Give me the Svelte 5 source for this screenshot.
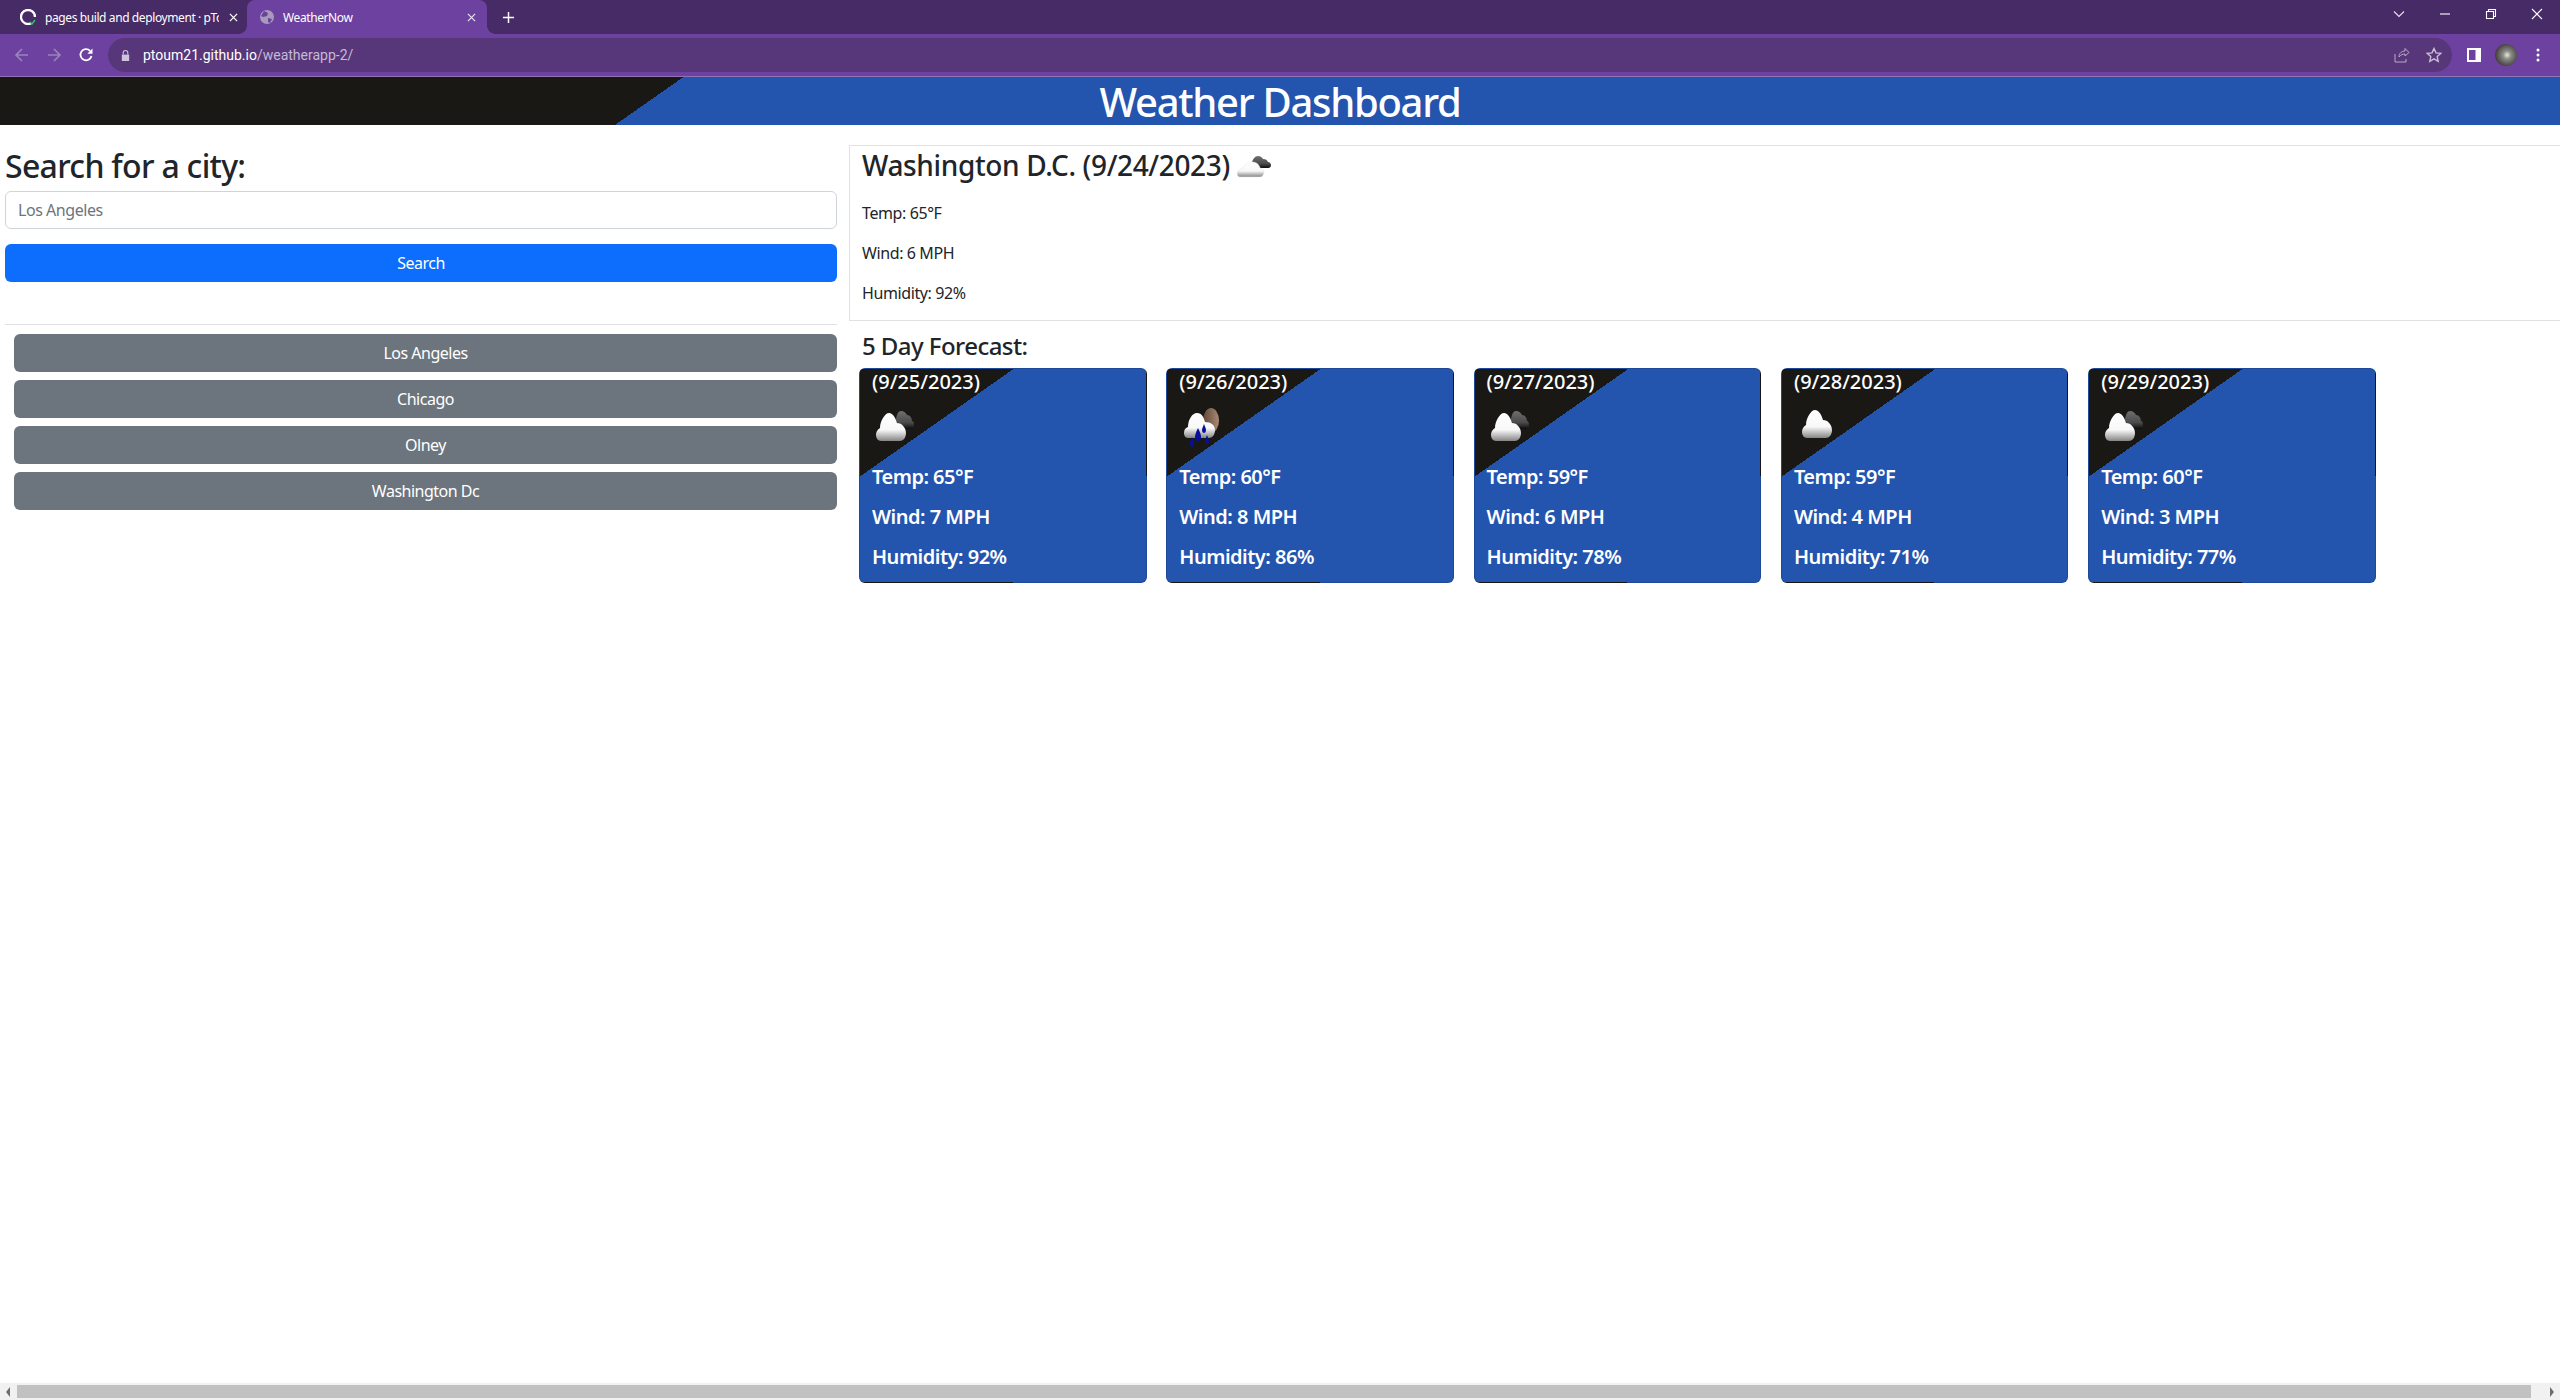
<script>
  const cities = ["Los Angeles", "Chicago", "Olney", "Washington Dc"];

  const forecast = [
    { date: "9/25/2023", icon: "clouds", temp: 65, wind: 7, humidity: 92 },
    { date: "9/26/2023", icon: "rain", temp: 60, wind: 8, humidity: 86 },
    { date: "9/27/2023", icon: "clouds", temp: 59, wind: 6, humidity: 78 },
    { date: "9/28/2023", icon: "cloud", temp: 59, wind: 4, humidity: 71 },
    { date: "9/29/2023", icon: "clouds", temp: 60, wind: 3, humidity: 77 },
  ];

  const cloudPath = "M9 44c-3 0-5-3-5-6 0-3 1-5 4-7 0-7 5-15 9-15 4 0 7 6 8 10 5 0 9 5 9 10 0 5-3 8-6 8z";
</script>

{#snippet cloudDefs()}
  <defs>
    <linearGradient id="cloudWhite" x1="0" y1="0" x2="0" y2="1">
      <stop offset="0" stop-color="#ffffff" />
      <stop offset="0.6" stop-color="#f8f8f8" />
      <stop offset="1" stop-color="#858585" />
    </linearGradient>
    <linearGradient id="cloudDark" x1="0" y1="0" x2="0" y2="1">
      <stop offset="0" stop-color="#6f6f6f" />
      <stop offset="0.65" stop-color="#4a4a4a" />
      <stop offset="1" stop-color="#0c0c0c" />
    </linearGradient>
    <linearGradient id="sun" x1="0" y1="0" x2="1" y2="0">
      <stop offset="0" stop-color="#5f4738" />
      <stop offset="1" stop-color="#a98a74" />
    </linearGradient>
  </defs>
{/snippet}

{#snippet weatherIcon(kind)}
  <svg class="weather-icon" viewBox="0 0 50 50" aria-hidden="true">
    {#if kind === "clouds"}
      <path d="M24 24c0-5 2-10 5-10 3 0 5 2 6 4 3 0 5 3 5 6 2 0 2 3 2 5 0 2-1 3-3 3H30z" fill="url(#cloudDark)" />
      <path d={cloudPath} fill="url(#cloudWhite)" />
    {:else if kind === "cloud"}
      <path d={cloudPath} fill="url(#cloudWhite)" transform="translate(4 -3)" />
    {:else}
      <ellipse cx="32" cy="23.5" rx="8" ry="12.5" fill="url(#sun)" />
      <path d="M9 41c-3 0-4-3-4-5 0-3 1-5 4-6 0-7 4-14 9-14 5 0 7 5 8 9 6 0 10 3 10 8 0 5-3 8-6 8z" fill="url(#cloudWhite)" />
      <path d="M19 31c2 4 3 6 3 9s-1 4-3 4-3-2-3-4 1-5 3-9zM13 40c1 3 2 4 2 6s-1 4-2 4-2-2-2-4 1-3 2-6zM28 38c1 3 2 4 2 6s-1 3-2 3-2-1-2-3 1-3 2-6zM25 27c1 3 2 4 2 6s-1 3-2 3-2-1-2-3 1-3 2-6z" fill="#06109c" />
    {/if}
  </svg>
{/snippet}

<svg class="defs" aria-hidden="true">{@render cloudDefs()}</svg>

<div class="window">
  <div class="tabstrip">
    <div class="tab">
      <svg class="favicon" viewBox="0 0 16 16">
        <path d="M11 14.300A7 7 0 1 1 15 8" fill="none" stroke="#fff" stroke-width="2.400" />
        <path d="M10 13l2 2 3-4" fill="none" stroke="#35c46a" stroke-width="1.400" />
      </svg>
      <span class="tab-title">pages build and deployment · pTo</span>
      <svg class="tab-close" viewBox="0 0 10 10"><path d="M1 1l8 8M9 1L1 9" stroke="#fff" stroke-width="1.400" /></svg>
    </div>
    <div class="tab active">
      <svg class="favicon" viewBox="0 0 16 16">
        <circle cx="8" cy="8" r="7" fill="#a79bb9" />
        <path d="M5 2l4 2-1 3-4 1-2-1zM9 9l4 1-2 4-2-1z" fill="#6d41a0" />
      </svg>
      <span class="tab-title">WeatherNow</span>
      <svg class="tab-close" viewBox="0 0 10 10"><path d="M1 1l8 8M9 1L1 9" stroke="#e6dff0" stroke-width="1.400" /></svg>
    </div>
    <svg class="new-tab" viewBox="0 0 14 14">
      <path d="M7 1v12M1 7h12" stroke="#fff" stroke-width="1.600" />
    </svg>
    <div class="window-controls">
      <svg viewBox="0 0 14 14"><path d="M2 4.500l5 5 5-5" fill="none" stroke="#e8e2ef" stroke-width="1.100" /></svg>
      <svg viewBox="0 0 14 14"><path d="M2 7h10" stroke="#fff" stroke-width="1.100" /></svg>
      <svg viewBox="0 0 14 14"><path d="M2.500 4.500h7v7h-7zM4.500 4.500v-2h7v7h-2" fill="none" stroke="#fff" stroke-width="1.100" /></svg>
      <svg viewBox="0 0 14 14"><path d="M2 2l10 10M12 2L2 12" stroke="#fff" stroke-width="1.100" /></svg>
    </div>
  </div>

  <div class="toolbar">
    <svg class="nav" viewBox="0 0 16 16"><path d="M14 8H2.500M8 2L2 8l6 6" fill="none" stroke="#9a83b8" stroke-width="1.700" /></svg>
    <svg class="nav" viewBox="0 0 16 16"><path d="M2 8h11.500M8 2l6 6-6 6" fill="none" stroke="#9a83b8" stroke-width="1.700" /></svg>
    <svg class="nav" viewBox="0 0 16 16"><path d="M13.500 9a5.600 5.600 0 1 1-1.400-5.200" fill="none" stroke="#fff" stroke-width="1.800" /><path d="M14.500 1.500v5.200H9.300z" fill="#fff" /></svg>
    <div class="omnibox">
      <svg class="lock" viewBox="0 0 12 14"><path d="M3.500 6V4a2.500 2.500 0 0 1 5 0v2" fill="none" stroke="#cfc4dc" stroke-width="1.200" /><rect x="2" y="6" width="8" height="7" fill="#cfc4dc" /></svg>
      <span class="url"><span class="host">ptoum21.github.io</span>/weatherapp-2/</span>
      <svg class="omni-icon" viewBox="0 0 16 16"><path d="M1 7v8h11v-3M5 10c0-4 3-6 6-6V1.500L15 5.500 11 9V7C8.500 7 6.500 8 5 10z" fill="none" stroke="#b9abc9" stroke-width="1" /></svg>
      <svg class="omni-icon star" viewBox="0 0 16 16"><path d="M8 1.500l2 4.400 4.700.5-3.500 3.200 1 4.700L8 11.900l-4.200 2.400 1-4.700L1.300 6.400 6 5.900z" fill="none" stroke="#c9bfd6" stroke-width="1.400" /></svg>
    </div>
    <svg class="side-panel" viewBox="0 0 14 14"><rect width="14" height="14" fill="#fff" /><rect x="2" y="2" width="6.500" height="10" fill="#6d41a0" /></svg>
    <span class="avatar"></span>
    <svg class="menu" viewBox="0 0 4 14"><circle cx="2" cy="2" r="1.500" fill="#fff" /><circle cx="2" cy="7" r="1.500" fill="#fff" /><circle cx="2" cy="12" r="1.500" fill="#fff" /></svg>
  </div>

  <header class="banner">
    <h1>Weather Dashboard</h1>
  </header>

  <main class="content">
    <aside class="sidebar">
      <h2>Search for a city:</h2>
      <input class="city-input" type="text" placeholder="Los Angeles" />
      <button class="btn search" type="button">Search</button>
      <hr />
      <div class="history">
        {#each cities as city}
          <button class="btn city" type="button">{city}</button>
        {/each}
      </div>
    </aside>

    <section class="results">
      <div class="today">
        <h3>
          Washington D.C. (9/24/2023)
          <svg class="today-icon" viewBox="0 0 34 22" aria-hidden="true">
            <path d="M15 6c1-3 3-6 6-6 2 0 4 1 5 3 3 0 4 1 5 3 2 0 3 2 3 3 0 2-1 3-3 3H22c-2-3-4-5-7-6z" fill="url(#cloudDark)" />
            <path d="M3 21c-2 0-3-2-3-4 0-2 2-4 5-4 2-4 6-7 10-7 4 0 7 2 8 6 2 0 4 2 4 4 0 3-2 5-4 5z" fill="url(#cloudWhite)" stroke="#e4e4e4" stroke-width="0.500" />
          </svg>
        </h3>
        <p>Temp: 65°F</p>
        <p>Wind: 6 MPH</p>
        <p>Humidity: 92%</p>
      </div>

      <h4>5 Day Forecast:</h4>
      <div class="cards">
        {#each forecast as day}
          <article class="card">
            <div class="date">({day.date})</div>
            {@render weatherIcon(day.icon)}
            <p>Temp: {day.temp}°F</p>
            <p>Wind: {day.wind} MPH</p>
            <p>Humidity: {day.humidity}%</p>
          </article>
        {/each}
      </div>
    </section>
  </main>

  <div class="scrollbar">
    <span class="arrow left"></span>
    <span class="thumb"></span>
    <span class="arrow right"></span>
  </div>
</div>

<style>
  :global(body) {
    margin: 0;
    overflow: hidden;
    background: #fff;
  }

  .defs {
    display: block;
    width: 0;
    height: 0;
  }

  .window {
    display: flex;
    flex-direction: column;
    width: 2560px;
    height: 1400px;
    font-family: "Noto Sans", "Open Sans", sans-serif;
    color: #212529;
  }

  .tabstrip {
    display: flex;
    align-items: center;
    flex: none;
    height: 34px;
    background: #462b66;
    color: #fff;
    font-size: 12px;
  }

  .tab {
    display: flex;
    align-items: center;
    flex: none;
    box-sizing: border-box;
    width: 247px;
    height: 34px;
    padding: 0 9px 0 20px;
  }

  .tab.active {
    position: relative;
    width: 240px;
    padding: 0 11px 0 12px;
    background: #6d41a0;
    border-radius: 8px 8px 0 0;
  }

  .tab.active::before,
  .tab.active::after {
    content: "";
    position: absolute;
    bottom: 0;
    width: 8px;
    height: 8px;
  }

  .tab.active::before {
    left: -8px;
    background: radial-gradient(circle at 0 0, transparent 7.5px, #6d41a0 8px);
  }

  .tab.active::after {
    right: -8px;
    background: radial-gradient(circle at 100% 0, transparent 7.5px, #6d41a0 8px);
  }

  .favicon {
    width: 16px;
    height: 16px;
    flex: none;
  }

  .tab-title {
    flex: 1;
    min-width: 0;
    margin: 0 10px 0 9px;
    white-space: nowrap;
    overflow: hidden;
    letter-spacing: -0.4px;
  }

  .tab.active .tab-title {
    margin-left: 8px;
  }

  .tab-close {
    width: 9px;
    height: 9px;
    flex: none;
  }

  .new-tab {
    width: 13px;
    height: 13px;
    margin-left: 15px;
  }

  .window-controls {
    display: flex;
    align-self: flex-start;
    gap: 32px;
    margin-left: auto;
    padding: 7px 16px 0 0;
  }

  .window-controls svg {
    width: 14px;
    height: 14px;
  }

  .toolbar {
    display: flex;
    align-items: center;
    flex: none;
    height: 43px;
    padding: 0 20px 0 14px;
    gap: 16px;
    box-sizing: border-box;
    background: #6d41a0;
    border-bottom: 1px solid #9072b6;
  }

  .nav {
    width: 16px;
    height: 16px;
    flex: none;
  }

  .omnibox {
    display: flex;
    align-items: center;
    flex: 1;
    height: 34px;
    margin-left: -2px;
    padding: 0 10px 0 12px;
    background: #57377a;
    border-radius: 17px;
    color: #c6b9d6;
    font-size: 14px;
  }

  .lock {
    width: 11px;
    height: 13px;
    margin-right: 12px;
  }

  .host {
    color: #fff;
  }

  .url {
    flex: 1;
    font-family: "Roboto", sans-serif;
  }

  .omni-icon {
    width: 16px;
    height: 16px;
  }

  .star {
    margin-left: 16px;
  }

  .side-panel {
    width: 14px;
    height: 14px;
    margin-left: -1px;
  }

  .avatar {
    width: 22px;
    height: 22px;
    margin-left: -2px;
    border-radius: 50%;
    background: radial-gradient(circle at 55% 50%, #e8ecd0 0, #8c8c88 25%, #45413f 70%);
  }

  .menu {
    width: 4px;
    height: 14px;
    margin-left: 3px;
  }

  .banner {
    flex: none;
    height: 48px;
    background: linear-gradient(145deg, #1a1814 26%, #2354ae 26%);
    text-align: center;
  }

  h1 {
    margin: 0;
    color: #fff;
    font-size: 40px;
    font-weight: 500;
    line-height: 50px;
    letter-spacing: -1.3px;
  }

  .content {
    display: grid;
    grid-template-columns: 849px 1fr;
    flex: 1;
    min-height: 0;
  }

  .sidebar {
    padding: 20px 12px 0 5px;
  }

  h2 {
    margin: 0 0 6px;
    padding-top: 2px;
    font-size: 32px;
    font-weight: 500;
    line-height: 38px;
    letter-spacing: -0.7px;
  }

  .city-input {
    display: block;
    box-sizing: border-box;
    width: 100%;
    height: 38px;
    padding: 6px 12px;
    border: 1px solid #ced4da;
    border-radius: 6px;
    font: inherit;
    font-size: 16px;
    letter-spacing: -0.45px;
  }

  .city-input::placeholder {
    color: #6c757d;
  }

  .btn {
    display: block;
    box-sizing: border-box;
    width: 100%;
    height: 38px;
    border: 0;
    border-radius: 6px;
    color: #fff;
    font: inherit;
    font-size: 16px;
    letter-spacing: -0.5px;
  }

  .search {
    margin-top: 15px;
    background: #0d6efd;
  }

  hr {
    margin: 42px 0 9px;
    border: 0;
    border-top: 1px solid #e0e1e5;
  }

  .history {
    display: flex;
    flex-direction: column;
    gap: 8px;
    padding-left: 9px;
  }

  .city {
    background: #6c757d;
  }

  .results {
    padding-top: 20px;
  }

  .today {
    box-sizing: border-box;
    height: 176px;
    padding: 0 12px;
    border: 1px solid #e0e1e5;
    border-right: 0;
  }

  h3 {
    margin: 0 0 17px;
    font-size: 28px;
    font-weight: 500;
    line-height: 38px;
    letter-spacing: -0.36px;
  }

  .today-icon {
    width: 34px;
    height: 22px;
    vertical-align: -2px;
  }

  p {
    margin: 0 0 16px;
    font-size: 16px;
    line-height: 24px;
    letter-spacing: -0.4px;
  }

  h4 {
    margin: 10px 0 0 13px;
    font-size: 24px;
    font-weight: 500;
    line-height: 29px;
    letter-spacing: -0.55px;
  }

  .cards {
    display: flex;
    gap: 19.8px;
    margin: 8px 0 0 10px;
  }

  .card {
    box-sizing: border-box;
    width: 287.5px;
    height: 215px;
    padding: 0 12px;
    border: 1px solid rgba(0, 0, 0, 0.125);
    border-radius: 6px;
    background: linear-gradient(145deg, #1a1814 26%, #2354ae 26%);
    color: #fff;
  }

  .date {
    font-size: 20px;
    font-weight: 500;
    line-height: 26px;
  }

  .weather-icon {
    display: block;
    width: 50px;
    height: 50px;
    margin-top: 2px;
    filter: blur(0.4px);
  }

  .card p {
    margin: 16px 0 0;
    font-size: 20px;
    font-weight: 600;
    line-height: 24px;
    letter-spacing: -0.5px;
  }

  .card .weather-icon + p {
    margin-top: 18px;
  }

  .scrollbar {
    display: flex;
    align-items: center;
    flex: none;
    height: 17px;
    background: #f1f1f1;
  }

  .thumb {
    flex: 1;
    height: 13px;
    background: #c1c1c1;
  }

  .arrow {
    width: 0;
    height: 0;
    border-top: 5px solid transparent;
    border-bottom: 5px solid transparent;
  }

  .arrow.left {
    margin: 0 7px 0 6px;
    border-right: 4px solid #6e6e6e;
  }

  .arrow.right {
    margin: 0 6px 0 19px;
    border-left: 4px solid #6e6e6e;
  }
</style>
